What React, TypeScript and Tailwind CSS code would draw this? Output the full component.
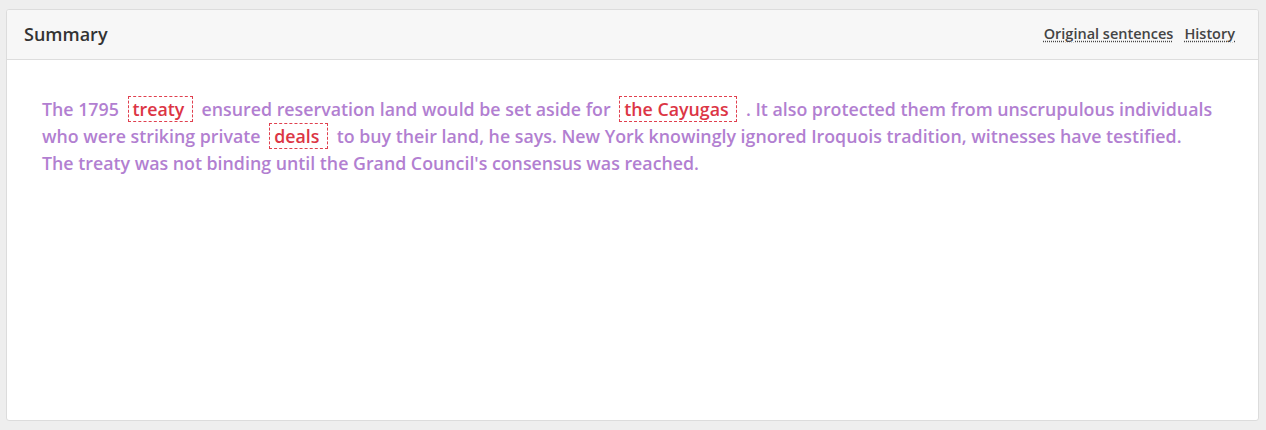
import React from "react";

type Part = { text: string; mark?: boolean };

const parts: Part[] = [
  { text: "The 1795 " },
  { text: "treaty", mark: true },
  { text: " ensured reservation land would be set aside for " },
  { text: "the Cayugas", mark: true },
  { text: " . It also protected them from unscrupulous individuals who were striking private " },
  { text: "deals", mark: true },
  {
    text:
      " to buy their land, he says. New York knowingly ignored Iroquois tradition, witnesses have testified. The treaty was not binding until the Grand Council's consensus was reached.",
  },
];

export default function App() {
  return (
    <div
      className="min-h-[430px] bg-[#eeeeee] pt-[9px] pl-[6px] pr-[7px] pb-[9px]"
      style={{ fontFamily: '"Open Sans", "Liberation Sans", sans-serif' }}
    >
      <div className="h-[412px] overflow-hidden rounded-[3px] border border-[#dcdcdc] bg-white">
        <div className="flex h-[50px] items-center justify-between border-b border-[#dddddd] bg-[#f7f7f7] pl-[17px] pr-[23px]">
          <h2 className="text-[18px] font-semibold text-[#333333]">Summary</h2>
          <div className="-mt-[2px] flex gap-[11px] text-[14.5px] font-semibold text-[#444444]">
            <a className="cursor-pointer underline decoration-dotted underline-offset-2">Original sentences</a>
            <a className="cursor-pointer underline decoration-dotted underline-offset-2">History</a>
          </div>
        </div>
        <p className="pl-[35px] pr-[42px] pt-[36px] text-[17.8px] font-semibold leading-[27px] text-[#b27fd1]">
          {parts.map((p, i) =>
            p.mark ? (
              <span
                key={i}
                className="mx-[4px] border border-dashed border-[#e0404f] py-[0px] pl-[4px] pr-[3px] text-[#dc3545]"
              >
                {p.text}&nbsp;
              </span>
            ) : (
              <span key={i}>{p.text}</span>
            )
          )}
        </p>
      </div>
    </div>
  );
}
